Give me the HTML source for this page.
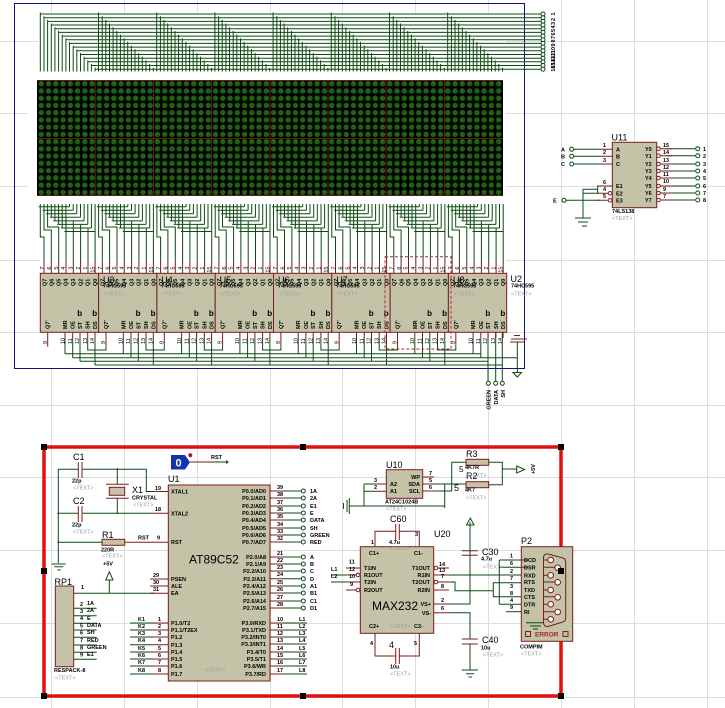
<!DOCTYPE html>
<html><head><meta charset="utf-8"><style>
html,body{margin:0;padding:0;background:#fff;width:725px;height:708px;overflow:hidden}
svg{display:block}
text{font-family:"Liberation Sans",sans-serif;fill:#000}
.w{stroke:#0c4a10;stroke-width:1;fill:none}
.p{stroke:#7c1c1c;stroke-width:1;fill:none}
.c{fill:#c4c3a8;stroke:#7c1c1c;stroke-width:1}
.t{font-size:5.5px;font-weight:bold}
.n{font-size:5.5px}
.g text,text.g{font-size:5.5px;fill:#9a9a9a}
.b{font-size:9px}
.e{text-anchor:end}
.m{text-anchor:middle}
.o{fill:#fff;stroke:#0c4a10;stroke-width:1}
.q{fill:#fff;stroke:#7c1c1c;stroke-width:1}
</style></head><body>
<svg width="725" height="708" viewBox="0 0 725 708" xmlns="http://www.w3.org/2000/svg">
<defs>
<pattern id="dots" patternUnits="userSpaceOnUse" x="37" y="80" width="7.26" height="7.24">
<rect width="7.26" height="7.24" fill="#000"/><circle cx="4.3" cy="3.7" r="2.75" fill="#1e6212"/>
</pattern>
<path id="top" class="w" d="M0 12.5V71.5M3.7 16.2V71.5M7.3 19.9V71.5M11 23.5V71.5M14.6 27.2V71.5M18.3 30.9V71.5M21.9 34.6V71.5M25.6 38.3V71.5M29.2 41.9V71.5M32.9 45.6V71.5M36.5 49.3V71.5M40.2 53V71.5M43.8 56.7V71.5M47.5 60.3V71.5M51.1 64V71.5M54.8 67.7V71.5"/>
<path id="low" class="w" d="M-1.5 206.7H29.2M2.2 210.2H32.9M5.8 213.8H36.5M9.5 217.3H40.2M13.1 220.9H43.8M16.8 224.4H47.5M20.4 228H51.1M24.1 231.5H54.8
M0 204V237H3.7V261M3.7 204V230H11V261M7.3 204V227H18.4V261M11 204V217.3M14.6 204V220.9M18.3 204V224.4M21.9 204V228M25.6 204V231.5
M29.2 204V206.7M32.9 204V210.2M36.5 204V213.8M40.2 204V217.3M43.8 204V220.9M47.5 204V224.4M51.1 204V228M54.8 204V261
M25.7 217.3V261M33 220.9V261M40.3 224.4V261M47.7 228V261"/>
<g id="chip">
<path class="p" d="M3.7 261V273M11 261V273M18.4 261V273M25.7 261V273M33 261V273M40.3 261V273M47.7 261V273M54.8 261V273M7.4 332V346.7M24.7 332V338M32.4 332V338M39.7 332V338M47.4 332V338M54.7 332V338"/>
<rect class="c" x="0" y="273.3" width="58.3" height="59"/>
<g class="n e">
<text transform="translate(3.5,266.5) rotate(-90)">7</text><text transform="translate(10.8,266.5) rotate(-90)">6</text><text transform="translate(17.5,266.5) rotate(-90)">5</text><text transform="translate(24.9,266.5) rotate(-90)">4</text><text transform="translate(32.2,266.5) rotate(-90)">3</text><text transform="translate(39.5,266.5) rotate(-90)">2</text><text transform="translate(46.9,266.5) rotate(-90)">1</text><text transform="translate(54.3,266.5) rotate(-90)">15</text>
</g>
<g class="t">
<text transform="translate(6,286) rotate(-90)">Q7</text><text transform="translate(13.3,286) rotate(-90)">Q6</text><text transform="translate(20,286) rotate(-90)">Q5</text><text transform="translate(27.4,286) rotate(-90)">Q4</text><text transform="translate(34.7,286) rotate(-90)">Q3</text><text transform="translate(42,286) rotate(-90)">Q2</text><text transform="translate(49.4,286) rotate(-90)">Q1</text><text transform="translate(56.8,286) rotate(-90)">Q0</text>
<text transform="translate(9.4,329) rotate(-90)">Q7'</text><text transform="translate(26.7,329) rotate(-90)">MR</text><text transform="translate(34.4,329) rotate(-90)">OE</text><text transform="translate(41.7,329) rotate(-90)">ST</text><text transform="translate(49.4,329) rotate(-90)">SH</text><text transform="translate(56.7,329) rotate(-90)">DS</text>
<text x="37" y="316" font-size="8">b</text><text x="52" y="316" font-size="8">b</text>
</g>
<g class="n">
<text transform="translate(6.5,344) rotate(-90)">9</text><text transform="translate(24,344) rotate(-90)">10</text><text transform="translate(31.5,344) rotate(-90)">11</text><text transform="translate(38.8,344) rotate(-90)">12</text><text transform="translate(46.5,344) rotate(-90)">13</text><text transform="translate(53.8,344) rotate(-90)">14</text>
</g>
</g>
<path id="bot" class="w" d="M24.7 338V353.7M32.4 338V357.7M39.7 338V361.3M54.7 338V365M47.4 338V350H65.7V346.7"/>
</defs>

<rect width="725" height="708" fill="#fff"/>
<g stroke="#dcdcdc" stroke-width="1" fill="none">
<path d="M51.5 0V708M124.5 0V708M197.5 0V708M270.5 0V708M342.5 0V708M415.5 0V708M488.5 0V708M561.5 0V708M634.5 0V708M707.5 0V708M0 41.5H725M0 113.5H725M0 186.5H725M0 260.5H725M0 332.5H725M0 405.5H725M0 477.5H725M0 550.5H725M0 623.5H725M0 697.5H725"/>
</g>
<rect x="28" y="13" width="478" height="355" fill="#fff"/>
<path stroke="#dcdcdc" d="M28 41.5H38M28 260.5H40M28 332.5H40"/>
<rect x="14.5" y="3.5" width="510" height="365" fill="none" stroke="#101080" stroke-width="1"/>

<!-- LED matrix -->
<rect x="37" y="80" width="466" height="116" fill="url(#dots)"/>
<path stroke="#6a1818" stroke-width="1" fill="none" d="M37 80.5H503M37 138.5H503M37 195.5H503M95.3 80V196M153.5 80V196M211.5 80V196M270 80V196M328 80V196M386 80V196M444.5 80V196"/>

<!-- top wires -->
<path class="w" d="M40.3 14H541M44 17.7H541M47.6 21.4H541M51.3 25H541M54.9 28.7H541M58.6 32.4H541M62.2 36.1H541M65.9 39.8H541M69.5 43.4H541M73.2 47.1H541M76.8 50.8H541M80.5 54.5H541M84.1 58.2H541M87.8 61.8H541M91.4 65.5H541M95.1 69.2H541"/>
<use href="#top" x="40.3"/><use href="#top" x="98.5"/><use href="#top" x="156.7"/><use href="#top" x="214.9"/><use href="#top" x="273.1"/><use href="#top" x="331.3"/><use href="#top" x="389.5"/><use href="#top" x="447.7"/>
<g class="o"><circle cx="543" cy="14" r="2"/><circle cx="543" cy="17.7" r="2"/><circle cx="543" cy="21.4" r="2"/><circle cx="543" cy="25" r="2"/><circle cx="543" cy="28.7" r="2"/><circle cx="543" cy="32.4" r="2"/><circle cx="543" cy="36.1" r="2"/><circle cx="543" cy="39.8" r="2"/><circle cx="543" cy="43.4" r="2"/><circle cx="543" cy="47.1" r="2"/><circle cx="543" cy="50.8" r="2"/><circle cx="543" cy="54.5" r="2"/><circle cx="543" cy="58.2" r="2"/><circle cx="543" cy="61.8" r="2"/><circle cx="543" cy="65.5" r="2"/><circle cx="543" cy="69.2" r="2"/></g>
<g class="t m" font-size="6">
<text transform="translate(555,14) rotate(-90)">1</text><text transform="translate(555,19.5) rotate(-90)">2</text><text transform="translate(555,23.5) rotate(-90)">3</text><text transform="translate(555,27) rotate(-90)">4</text><text transform="translate(555,30.5) rotate(-90)">5</text><text transform="translate(555,34) rotate(-90)">6</text><text transform="translate(555,37.5) rotate(-90)">7</text><text transform="translate(555,41) rotate(-90)">8</text><text transform="translate(555,45) rotate(-90)">9</text><text transform="translate(555,50) rotate(-90)">10</text><text transform="translate(555,53) rotate(-90)">11</text><text transform="translate(555,56) rotate(-90)">12</text><text transform="translate(555,59) rotate(-90)">13</text><text transform="translate(555,62) rotate(-90)">14</text><text transform="translate(555,65.5) rotate(-90)">15</text><text transform="translate(555,68.5) rotate(-90)">16</text>
</g>

<!-- lower wires -->
<use href="#low" x="40.3"/><use href="#low" x="98.6"/><use href="#low" x="156.9"/><use href="#low" x="215.2"/><use href="#low" x="273.5"/><use href="#low" x="331.8"/><use href="#low" x="390.1"/><use href="#low" x="448.4"/>
<!-- bus -->
<path class="w" d="M65 353.7H481M72.7 357.7H517M80 361.3H488M95 365H502.5M517.3 342V372M488 332V381M495.7 332V381M502.3 332V381M473.1 338V353.7M480.8 338V357.7"/>
<use href="#bot" x="40.3"/><use href="#bot" x="98.6"/><use href="#bot" x="156.9"/><use href="#bot" x="215.2"/><use href="#bot" x="273.5"/><use href="#bot" x="331.8"/><use href="#bot" x="390.1"/>
<!-- chips -->
<use href="#chip" x="40.3"/><use href="#chip" x="98.6"/><use href="#chip" x="156.9"/><use href="#chip" x="215.2"/><use href="#chip" x="273.5"/><use href="#chip" x="331.8"/><use href="#chip" x="390.1"/><use href="#chip" x="448.4"/>
<!-- chip labels -->
<text class="b" x="103" y="283">U3</text><text class="t" x="103" y="287.5">74HC595</text><text class="g" x="104" y="295.5">&lt;TEXT&gt;</text>
<text class="b" x="161.3" y="283">U4</text><text class="t" x="161.3" y="287.5">74HC595</text><text class="g" x="162" y="295.5">&lt;TEXT&gt;</text>
<text class="b" x="219.6" y="283">U5</text><text class="t" x="219.6" y="287.5">74HC595</text><text class="g" x="220.5" y="295.5">&lt;TEXT&gt;</text>
<text class="b" x="278" y="283">U6</text><text class="t" x="278" y="287.5">74HC595</text><text class="g" x="279" y="295.5">&lt;TEXT&gt;</text>
<text class="b" x="336.3" y="283">U7</text><text class="t" x="336.3" y="287.5">74HC595</text><text class="g" x="337" y="295.5">&lt;TEXT&gt;</text>
<text class="b" x="453" y="283">U8</text><text class="t" x="453" y="287.5">74HC595</text><text class="g" x="454" y="295.5">&lt;TEXT&gt;</text>
<text class="b" x="510.5" y="282">U2</text><text class="t" x="511" y="287.5">74HC595</text><text class="g" x="511" y="295.5">&lt;TEXT&gt;</text>
<rect x="385" y="256.7" width="66" height="92.3" fill="none" stroke="#b02838" stroke-width="1" stroke-dasharray="3 2"/>
<!-- ground/power right -->
<path class="p" d="M514 335.5H520M511 339H527M510 342H524"/>
<path class="w" d="M513 372.5H521.5L517.3 377Z"/>
<g class="o"><circle cx="488.3" cy="383.3" r="2"/><circle cx="495.7" cy="383.3" r="2"/><circle cx="502.3" cy="383.3" r="2"/></g>
<g class="t e">
<text transform="translate(490.5,390) rotate(-90)">GREEN</text><text transform="translate(498,390) rotate(-90)">DATA</text><text transform="translate(505,390) rotate(-90)">SH</text>
</g>

<!-- U11 -->
<path class="w" d="M574 149.3H600M574 156.3H600M574 164H600M566 200.3H600M583 218V189.3H598M597.7 186V193.3M583 193.3H598M666 148.7H695M666 155.7H695M666 164H695M666 171H695M666 178H695M666 186H695M666 193H695M666 200H695M575 218H591M578 222H588M582 226H587"/>
<path class="p" d="M600 149.3H612M600 156.3H612M600 164H612M597 186H612M597 193.3H608M597 200.3H608M660 148.7H672M660 155.7H672M660 164H672M660 171H672M660 178H672M660 186H672M660 193H672M660 200H672"/>
<rect class="c" x="612.3" y="142.3" width="44.4" height="65.4"/>
<g class="q"><circle cx="610" cy="193.3" r="1.8"/><circle cx="610" cy="200.3" r="1.8"/><circle cx="658.5" cy="148.7" r="1.8"/><circle cx="658.5" cy="155.7" r="1.8"/><circle cx="658.5" cy="164" r="1.8"/><circle cx="658.5" cy="171" r="1.8"/><circle cx="658.5" cy="178" r="1.8"/><circle cx="658.5" cy="186" r="1.8"/><circle cx="658.5" cy="193" r="1.8"/><circle cx="658.5" cy="200" r="1.8"/></g>
<g class="o"><circle cx="571.7" cy="149.3" r="2"/><circle cx="571.7" cy="156.3" r="2"/><circle cx="571.7" cy="164" r="2"/><circle cx="564" cy="200.3" r="2"/><circle cx="697.7" cy="148.7" r="2"/><circle cx="697.7" cy="155.7" r="2"/><circle cx="697.7" cy="164" r="2"/><circle cx="697.7" cy="171" r="2"/><circle cx="697.7" cy="178" r="2"/><circle cx="697.7" cy="186" r="2"/><circle cx="697.7" cy="193" r="2"/><circle cx="697.7" cy="200" r="2"/></g>
<text class="b" x="611.5" y="140.5">U11</text>
<g class="t">
<text x="561" y="151.5">A</text><text x="561" y="158.5">B</text><text x="561" y="166">C</text><text x="553" y="202.5">E</text>
<text x="616" y="151.5">A</text><text x="616" y="158.5">B</text><text x="616" y="166">C</text><text x="616" y="188">E1</text><text x="616" y="195.5">E2</text><text x="616" y="202.5">E3</text>
<text x="645" y="151">Y0</text><text x="645" y="158">Y1</text><text x="645" y="166">Y2</text><text x="645" y="173">Y3</text><text x="645" y="180">Y4</text><text x="645" y="188">Y5</text><text x="645" y="195">Y6</text><text x="645" y="202">Y7</text>
<text x="703" y="151">1</text><text x="703" y="158">2</text><text x="703" y="166">3</text><text x="703" y="173">4</text><text x="703" y="180">5</text><text x="703" y="188">6</text><text x="703" y="195">7</text><text x="703" y="202">8</text>
<text x="603" y="147">1</text><text x="603" y="154">2</text><text x="603" y="162">3</text><text x="603" y="184">6</text><text x="603" y="191">4</text><text x="603" y="198">5</text>
<text x="663" y="147">15</text><text x="663" y="154">14</text><text x="663" y="162">13</text><text x="663" y="169">12</text><text x="663" y="176">11</text><text x="663" y="183">10</text><text x="663" y="191">9</text><text x="663" y="198">7</text>
<text x="612" y="213">74LS138</text>
</g>
<text class="g" x="612" y="220">&lt;TEXT&gt;</text>

<!-- Red box -->
<rect x="44" y="447" width="517" height="249" fill="none" stroke="#e01010" stroke-width="3.5"/>

<!-- Lower wires -->
<path class="w" d="M58.3 563V469.3H78M82 469.3H146.3V491.5H155M57.3 513.3H78M82 513.3H150M117.3 468V484M117.3 498V514M57.3 542.3H102M73.7 593.3H155M109.3 580V593.3M51.7 564H65.7M54.3 566.7H63.3M57.3 570H60.7"/>
<path class="w" d="M73.7 608.3H96.7M73.7 615.7H96.7M73.7 623.3H96.7M73.7 630H96.7M73.7 637.3H96.7M73.7 645H96.7M73.7 652.3H96.7M73.7 659.3H96.7"/>
<path class="w" d="M130 623H152M130 630H152M130 637H152M130 644.7H152M130 652H152M130 659H152M130 666H152M130 674H152"/>
<path class="w" d="M284 491H301M284 498H301M284 506H301M284 513H301M284 520H301M284 528H301M284 535H301M284 542H301M284 557H301M284 564H301M284 571H301M284 578.7H301M284 586H301M284 593H301M284 601H301M284 608H301M284 623H307M284 630H307M284 637H307M284 644H307M284 652H307M284 659H307M284 666H307M284 674H307"/>
<path class="p" d="M155 491.5H168M150 513.3H168M125 542.3H168M150 579H168M150 586H168M150 593.3H168M152 623H168M152 630H168M152 637H168M152 644.7H168M152 652H168M152 659H168M152 666H168M152 674H168M270 491H284M270 498H284M270 506H284M270 513H284M270 520H284M270 528H284M270 535H284M270 542H284M270 557H284M270 564H284M270 571H284M270 578.7H284M270 586H284M270 593H284M270 601H284M270 608H284M270 623H284M270 630H284M270 637H284M270 644H284M270 652H284M270 659H284M270 666H284M270 674H284"/>
<path class="p" d="M78.3 462V478M82 462V478M78.3 506V522M82 506V522M190 462H212"/>
<path class="w" d="M212 462H228M226 460.5L228 462L226 463.5"/>
<path class="w" d="M105.7 580H113L109.3 571.7Z"/>
<path class="p" d="M106 484.3H128.7M106 498.3H128.7"/>
<rect class="c" x="109.3" y="487.3" width="15.4" height="8"/>
<rect class="c" x="102" y="539.3" width="22.7" height="6"/>
<rect class="c" x="55.3" y="586" width="18.4" height="80.7"/>
<rect class="c" x="168.3" y="485" width="101.7" height="196"/>
<path d="M171 455H185L190 462.3L185 469.5H171Z" fill="#1034b0"/>
<text x="175.5" y="466.5" font-size="11" font-weight="bold" style="fill:#fff">0</text>
<circle cx="190.3" cy="455.3" r="2" fill="#b01020"/>
<text class="t" x="211" y="459">RST</text>
<g class="b"><text x="73" y="460">C1</text><text x="73" y="504">C2</text><text x="132" y="493">X1</text><text x="102" y="538">R1</text><text x="54.5" y="585">RP1</text><text x="168" y="482">U1</text></g>
<text x="189" y="563.5" font-size="12">AT89C52</text>
<g class="t">
<text x="72" y="482.5">22p</text><text x="72" y="526.5">22p</text><text x="132" y="499.5">CRYSTAL</text><text x="101" y="551.5">220R</text><text x="103" y="565.5">+5V</text><text x="54" y="672">RESPACK-8</text>
<text x="138" y="539.5">RST</text><text x="157" y="539.5">9</text><text x="155" y="490">19</text><text x="155" y="511">18</text>
<text x="81" y="589">1</text><text x="80" y="606">2</text><text x="80" y="613">3</text><text x="80" y="620">4</text><text x="80" y="627.5">5</text><text x="80" y="634.5">6</text><text x="80" y="642">7</text><text x="80" y="649.5">8</text><text x="80" y="656.5">9</text>
<text x="87" y="605">1A</text><text x="87" y="612">2A</text><text x="87" y="620">E</text><text x="87" y="627">DATA</text><text x="87" y="634">SH</text><text x="87" y="642">RED</text><text x="87" y="649">GREEN</text><text x="87" y="656">E1</text>
<text x="171" y="493.5">XTAL1</text><text x="171" y="515.5">XTAL2</text><text x="171" y="544">RST</text><text x="171" y="581">PSEN</text><text x="171" y="588">ALE</text><text x="171" y="595">EA</text>
<text x="171" y="625">P1.0/T2</text><text x="171" y="632">P1.1/T2EX</text><text x="171" y="639">P1.2</text><text x="171" y="647">P1.3</text><text x="171" y="654">P1.4</text><text x="171" y="661">P1.5</text><text x="171" y="668">P1.6</text><text x="171" y="676">P1.7</text>
<text x="153" y="577">29</text><text x="153" y="584">30</text><text x="153" y="591">31</text>
<text x="158" y="621">1</text><text x="158" y="628">2</text><text x="158" y="635">3</text><text x="158" y="642">4</text><text x="158" y="650">5</text><text x="158" y="657">6</text><text x="158" y="664">7</text><text x="158" y="672">8</text>
<text x="138" y="621">K1</text><text x="138" y="628">K2</text><text x="138" y="635">K3</text><text x="138" y="642">K4</text><text x="138" y="650">K5</text><text x="138" y="657">K6</text><text x="138" y="664">K7</text><text x="138" y="672">K8</text>
</g>
<g class="t e">
<text x="266" y="493">P0.0/AD0</text><text x="266" y="500">P0.1/AD1</text><text x="266" y="508">P0.2/AD2</text><text x="266" y="515">P0.3/AD3</text><text x="266" y="522">P0.4/AD4</text><text x="266" y="530">P0.5/AD5</text><text x="266" y="537">P0.6/AD6</text><text x="266" y="544">P0.7/AD7</text>
<text x="266" y="559">P2.0/A8</text><text x="266" y="566">P2.1/A9</text><text x="266" y="573">P2.2/A10</text><text x="266" y="581">P2.3/A11</text><text x="266" y="588">P2.4/A12</text><text x="266" y="595">P2.5/A13</text><text x="266" y="603">P2.6/A14</text><text x="266" y="610">P2.7/A15</text>
<text x="266" y="625">P3.0/RXD</text><text x="266" y="632">P3.1/TXD</text><text x="266" y="639">P3.2/INT0</text><text x="266" y="646">P3.3/INT1</text><text x="266" y="654">P3.4/T0</text><text x="266" y="661">P3.5/T1</text><text x="266" y="668">P3.6/WR</text><text x="266" y="676">P3.7/RD</text>
</g>
<g class="t">
<text x="277" y="489">39</text><text x="277" y="496">38</text><text x="277" y="504">37</text><text x="277" y="511">36</text><text x="277" y="518">35</text><text x="277" y="526">34</text><text x="277" y="533">33</text><text x="277" y="540">32</text>
<text x="277" y="555">21</text><text x="277" y="562">22</text><text x="277" y="569">23</text><text x="277" y="576">24</text><text x="277" y="584">25</text><text x="277" y="591">26</text><text x="277" y="599">27</text><text x="277" y="606">28</text>
<text x="277" y="621">10</text><text x="277" y="628">11</text><text x="277" y="635">12</text><text x="277" y="642">13</text><text x="277" y="650">14</text><text x="277" y="657">15</text><text x="277" y="664">16</text><text x="277" y="672">17</text>
<text x="310" y="493">1A</text><text x="310" y="500">2A</text><text x="310" y="508">E1</text><text x="310" y="515">E</text><text x="310" y="522">DATA</text><text x="310" y="530">SH</text><text x="310" y="537">GREEN</text><text x="310" y="544">RED</text>
<text x="310" y="559">A</text><text x="310" y="566">B</text><text x="310" y="573">C</text><text x="310" y="581">D</text><text x="310" y="588">A1</text><text x="310" y="595">B1</text><text x="310" y="603">C1</text><text x="310" y="610">D1</text>
<text x="299" y="621">L1</text><text x="299" y="628">L2</text><text x="299" y="635">L3</text><text x="299" y="642">L4</text><text x="299" y="650">L5</text><text x="299" y="657">L6</text><text x="299" y="664">L7</text><text x="299" y="672">L8</text>
</g>
<g class="g">
<text x="73" y="489.5">&lt;TEXT&gt;</text><text x="73" y="533.5">&lt;TEXT&gt;</text><text x="133" y="506.5">&lt;TEXT&gt;</text><text x="102" y="557.5">&lt;TEXT&gt;</text><text x="55" y="679.5">&lt;TEXT&gt;</text><text x="205" y="671.5">&lt;TEXT&gt;</text>
</g>
<g class="o">
<circle cx="303.3" cy="491" r="2"/><circle cx="303.3" cy="498" r="2"/><circle cx="303.3" cy="506" r="2"/><circle cx="303.3" cy="513" r="2"/><circle cx="303.3" cy="520" r="2"/><circle cx="303.3" cy="528" r="2"/><circle cx="303.3" cy="535" r="2"/><circle cx="303.3" cy="542" r="2"/>
<circle cx="303.3" cy="557" r="2"/><circle cx="303.3" cy="564" r="2"/><circle cx="303.3" cy="571" r="2"/><circle cx="303.3" cy="578.7" r="2"/><circle cx="303.3" cy="586" r="2"/><circle cx="303.3" cy="593" r="2"/><circle cx="303.3" cy="601" r="2"/><circle cx="303.3" cy="608" r="2"/>
</g>

<!-- U10, R2, R3 -->
<path class="w" d="M349.3 506H445M364 484V506M364 484H376M364 491.3H376M444.7 484V508M451.7 462.3V491M451.7 462.3H466M434 484H466M434 491H451.7M488.7 462.3H502.3V484.7H488.7M502.3 469H517M347 500V512"/>
<path class="w" d="M343.5 503V509M349.3 498V514"/>
<path class="p" d="M376 484H386M376 491.3H386M422.7 477H434M422.7 484H434M422.7 491H434"/>
<path class="w" d="M516.7 466L524.7 469.5L516.7 473Z"/>
<rect class="c" x="386.3" y="469.7" width="36.4" height="28.6"/>
<rect class="c" x="466" y="459.3" width="22.7" height="6"/>
<rect class="c" x="466" y="481.7" width="22.7" height="6"/>
<g class="b"><text x="386" y="468">U10</text><text x="466" y="457">R3</text><text x="466" y="479">R2</text><text x="459" y="472" font-size="8">5</text><text x="454" y="491">5</text></g>
<g class="t">
<text x="374" y="482">3</text><text x="374" y="489">2</text><text x="390" y="486">A2</text><text x="390" y="493">A1</text><text x="420" y="479" class="t e">WP</text><text x="420" y="486" class="t e">SDA</text><text x="420" y="493" class="t e">SCL</text><text x="429" y="475">7</text><text x="429" y="482">5</text><text x="429" y="489">6</text>
<text x="385" y="503.5">AT24C1024B</text><text x="465" y="469">4K7R</text><text x="465" y="491.5">4K7</text>
<text transform="translate(535,474) rotate(-90)">+5V</text>
</g>
<g class="g"><text x="386" y="510.5">&lt;TEXT&gt;</text><text x="466" y="477">&lt;TEXT&gt;</text><text x="466" y="499.5">&lt;TEXT&gt;</text></g>

<!-- U20 MAX232 -->
<path class="p" d="M375 546V531.3H395.7M399.3 531.3H419.3V546M395.7 524V540M399.3 524V540M375 633V656H395.7M399.3 656H419.3V633M395.7 648V664M399.3 648V664M346 568H360M346 582H360M346 590H356M346 575H356M436 568H449M436 582H449M434 575H449M434 590H449M434 604H449M434 612.7H449"/>
<path class="w" d="M331 575H346M331 582H346M449 575H521M449 582H455V590.7H493.3V582.7H521M493.3 590.7V596.7H521M499.3 560V604.3M499.3 560H521M499.3 567.3H521M499.3 604.3H521M449 604H470V522M449 612.7H470V639M470 644V670M470 550.7V555.3M461.7 670H478M466 673.7H474M468.5 677H472"/>
<path class="w" d="M466.5 525L470.3 518L474 525Z"/>
<path class="p" d="M461.7 550.7H477.7M461.7 555.3H477.7M461.7 639H477.7M461.7 644H477.7"/>
<rect class="c" x="360.3" y="546.7" width="73.4" height="86.6"/>
<g class="q"><circle cx="358" cy="575" r="1.8"/><circle cx="358" cy="590" r="1.8"/><circle cx="436" cy="568" r="1.8"/><circle cx="436" cy="582" r="1.8"/></g>
<g class="b"><text x="390" y="522">C60</text><text x="434" y="537">U20</text><text x="482" y="555">C30</text><text x="482" y="643">C40</text><text x="389" y="648">4</text><text x="521" y="544">P2</text></g>
<text x="372" y="610" font-size="12">MAX232</text>
<g class="t">
<text x="371" y="544">1</text><text x="415" y="536">3</text><text x="389" y="544">4.7u</text><text x="369" y="555">C1+</text><text x="414" y="555">C1-</text>
<text x="349" y="563.5">11</text><text x="349" y="571">12</text><text x="349" y="578">10</text><text x="350" y="586">9</text><text x="331" y="571">L1</text><text x="331" y="578">L2</text>
<text x="364" y="570">T1IN</text><text x="364" y="577">R1OUT</text><text x="364" y="584">T2IN</text><text x="364" y="592">R2OUT</text>
<text x="430" y="570" class="t e">T1OUT</text><text x="430" y="577" class="t e">R1IN</text><text x="430" y="584" class="t e">T2OUT</text><text x="430" y="592" class="t e">R2IN</text><text x="431" y="606" class="t e">VS+</text><text x="431" y="615" class="t e">VS-</text>
<text x="439" y="566">14</text><text x="439" y="572">13</text><text x="441" y="578">7</text><text x="441" y="588">8</text><text x="441" y="602">2</text><text x="441" y="610">6</text>
<text x="369" y="628">C2+</text><text x="414" y="628">C2-</text><text x="370" y="645">4</text><text x="414" y="645">5</text><text x="390" y="668.5">10u</text>
<text x="481" y="560.5">4.7u</text><text x="481" y="649.5">10u</text>
</g>
<g class="g"><text x="390" y="550">&lt;TEXT&gt;</text><text x="390" y="628">&lt;TEXT&gt;</text><text x="390" y="675.5">&lt;TEXT&gt;</text><text x="483" y="568.5">&lt;TEXT&gt;</text><text x="483" y="656.5">&lt;TEXT&gt;</text></g>

<!-- P2 COMPIM -->
<rect class="c" x="521.3" y="546.7" width="51.4" height="94.6"/>
<path class="p" d="M543.5 558Q543.5 553.5 548 554L563 558Q565.7 559 565.7 562V618Q565.7 621 563 622L548 626.5Q543.5 627 543.5 622ZM543.5 560H549M543.5 567.3H556M543.5 575.3H549M543.5 582H556M543.5 590H549M543.5 596.7H556M543.5 604.3H549M543.5 611.7H556M543.5 619.3H549M528 560H521M521 567.3H528"/>
<g class="q"><circle cx="550.7" cy="560" r="2.8"/><circle cx="557.7" cy="567.7" r="2.8"/><circle cx="550.7" cy="575.3" r="2.8"/><circle cx="557.7" cy="582.3" r="2.8"/><circle cx="550.7" cy="590" r="2.8"/><circle cx="557.7" cy="597.3" r="2.8"/><circle cx="550.7" cy="604.3" r="2.8"/><circle cx="557.7" cy="612" r="2.8"/><circle cx="550.7" cy="619.3" r="2.8"/></g>
<path class="w" d="M526 622.7H543M530 626H541M533 629H538"/>
<rect x="525.5" y="631.5" width="5" height="5" fill="none" stroke="#7c1c1c"/><rect x="563" y="631.5" width="5" height="5" fill="none" stroke="#7c1c1c"/>
<text x="535" y="636.5" font-size="6.5" font-weight="bold" style="fill:#b02020">ERROR</text>
<g class="t">
<text x="524" y="562">DCD</text><text x="524" y="569.5">DSR</text><text x="524" y="577.5">RXD</text><text x="524" y="584">RTS</text><text x="524" y="592">TXD</text><text x="524" y="599">CTS</text><text x="524" y="606.5">DTR</text><text x="524" y="614">RI</text>
<text x="510" y="557.5">1</text><text x="510" y="565">6</text><text x="510" y="573">2</text><text x="510" y="580">7</text><text x="510" y="588">3</text><text x="510" y="595">8</text><text x="510" y="602">4</text><text x="510" y="609">9</text>
<text x="520" y="648.5">COMPIM</text>
</g>
<text class="g" x="521" y="655.5">&lt;TEXT&gt;</text>
<path class="w" d="M506 611.7H521"/>

<!-- handles -->
<g fill="#000">
<rect x="41" y="444" width="6" height="6"/><rect x="41" y="568" width="6" height="6"/><rect x="41" y="693" width="6" height="6"/>
<rect x="300" y="444" width="6" height="6"/><rect x="300" y="693" width="6" height="6"/>
<rect x="558" y="444" width="6" height="6"/><rect x="558" y="568" width="6" height="6"/><rect x="558" y="693" width="6" height="6"/>
</g>
</svg>
</body></html>
